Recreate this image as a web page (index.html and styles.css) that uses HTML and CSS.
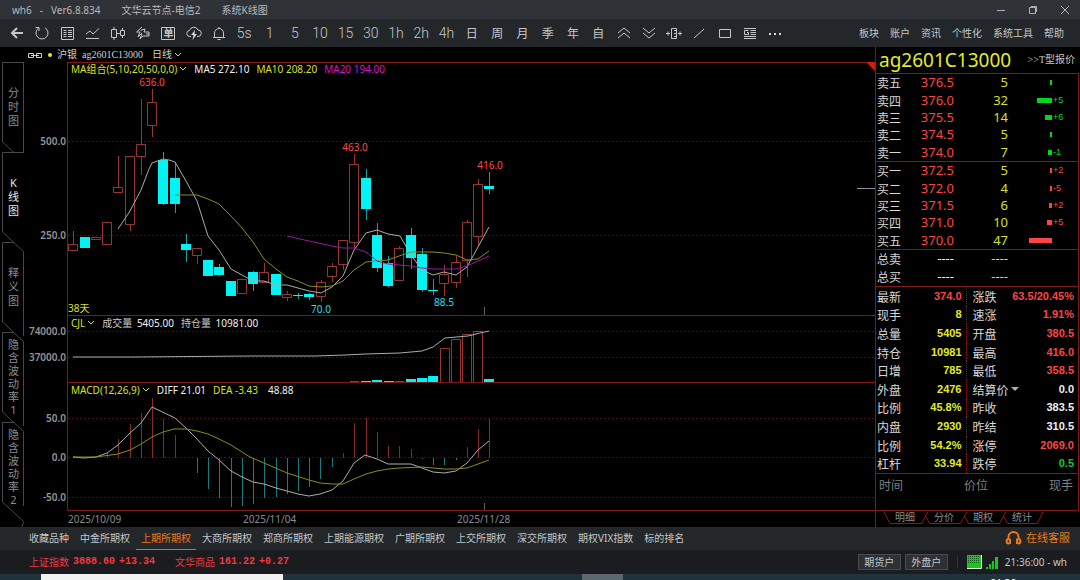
FILE: index.html
```html
<!DOCTYPE html>
<html lang="zh-CN">
<head>
<meta charset="utf-8">
<title>wh6 - Ver6.8.834</title>
<link rel="stylesheet" href="styles.css">
</head>
<body>
<header class="titlebar">
  <span class="app-name"><span>wh6</span><span>-</span><span>Ver6.8.834</span></span>
  <span>文华云节点-电信2</span>
  <span>系统K线图</span>
  <div class="window-buttons">
    <button aria-label="最小化"><svg width="10" height="10"><path d="M1 5.5H9"/></svg></button>
    <button aria-label="还原"><svg width="10" height="10"><path d="M1.5 2.5H7.5V8.5H1.5ZM3 1.5H8.500V7"/></svg></button>
    <button aria-label="关闭"><svg width="10" height="10"><path d="M1 1L9 9M9 1L1 9"/></svg></button>
  </div>
</header>

<div class="toolbar">
  <div class="tools">
    <button aria-label="返回"><svg width="16" height="16"><path class="thick" d="M3 8H14M8 3L3 8L8 13"/></svg></button>
    <button aria-label="刷新"><svg width="16" height="16"><path d="M1.500 2.500H5V6M5 2.800A6 6 0 1 0 11 2.800"/></svg></button>
    <button aria-label="报价表"><svg width="16" height="16"><path d="M2.500 2.500H14.500V14.500H2.500ZM4.500 5.500H7.500M9 5.500H13M4.500 7.500H7.500M9 7.500H13M4.500 9.500H7.500M9 9.500H13M4.500 11.500H7.500M9 11.500H13"/></svg></button>
    <button aria-label="分时图"><svg width="16" height="16"><path d="M1 9L5 6L8 9L14 3.500M1 13.500H14"/></svg></button>
    <button aria-label="K线图"><svg width="16" height="16"><path d="M1.500 4.500H6.500V12.500H1.500ZM4 2V4.500M4 12.500V15M10.500 5.500H14.500V10.500H10.500ZM12.500 3V5.500M12.500 10.500V13M7 8.500H10"/></svg></button>
    <button aria-label="闪电手"><svg width="16" height="16"><path d="M7 2L1.500 7H5L3 12L7 8M5.500 5.500L10 4L9 7H14V9H11M14 9V11H8L5 14L7 9"/></svg></button>
    <button class="boxed" aria-label="下单"><svg width="16" height="16"><path d="M1.500 2.500H14.500V14.500H1.500Z"/></svg><span>单</span></button>
    <button aria-label="云端"><svg width="16" height="16"><path class="cloud" d="M5 11.500H4A3 3 0 0 1 3.500 5.500A4.500 4.500 0 0 1 12 5A3.200 3.200 0 0 1 12 11.500H11"/><path class="solid" d="M9 5L5 10H7.500L6.500 15L11 9H8.500Z"/></svg></button>
    <button aria-label="提醒"><svg width="16" height="16"><path d="M2 12.500H14M3.500 12.500V8A4.500 4.500 0 0 1 12.500 8V12.500M8 2V3.500M6.500 14.500H9.500"/></svg></button>
    <button>5s</button><button>1</button><button>5</button><button>10</button><button>15</button><button>30</button><button>1h</button><button>2h</button><button>4h</button>
    <button class="cycle">日</button><button class="cycle">周</button><button class="cycle">月</button><button class="cycle">季</button><button class="cycle">年</button><button class="cycle">自</button>
    <button aria-label="上移"><svg width="16" height="16"><path d="M2 8L8 3L14 8M2 13L8 8L14 13"/></svg></button>
    <button aria-label="下移"><svg width="16" height="16"><path d="M2 3L8 8L14 3M2 8L8 13L14 8"/></svg></button>
    <button aria-label="画线尺"><svg width="18" height="16"><path d="M6.500 3.500H11.500V13.500H6.500ZM9 5.500H11M9 8.500H11M9 11.500H11M1 8.500H5M3 6.500V10.500M13 8.500H17M15 6.500V10.500"/></svg></button>
    <button aria-label="直线"><svg width="16" height="16"><path d="M3 13L13 4"/></svg></button>
    <button aria-label="矩形"><svg width="16" height="16"><path d="M2.500 4.500H13.500V12.500H2.500Z"/></svg></button>
    <button aria-label="资讯列表"><svg width="16" height="16"><path d="M2 3.500H14M8.500 5.500H14M8.500 7.500H14M8.500 9.500H14M2 11.500H14M2 13.500H14M6.500 5.500H2.500V9.500H6.500V7.500H5"/></svg></button>
    <button aria-label="更多"><svg width="16" height="16"><path class="solid" d="M2 8H4V10H2ZM7 8H9V10H7ZM12 8H14V10H12Z"/></svg></button>
  </div>
  <nav class="menu"><button>板块</button><button>账户</button><button>资讯</button><button>个性化</button><button>系统工具</button><button>帮助</button></nav>
</div>

<main class="workspace">
  <nav class="side-tabs">
    <svg class="side-shape" width="24" height="465" aria-hidden="true"><path d="M24 .5H2.500V80L14 90.500M24.500 90.500H2.500V170L23.500 189.500V274M23.500 0V90M14 180.500H2.500V260L23.500 279.500V364M14 270.500H2.500V350L23.500 369.500V444M14 360.500H2.500V440L23.500 459.500L22 465"/></svg>
    <button>分时图</button>
    <button class="active">K线图</button>
    <button>释义图</button>
    <button class="long">隐含波动率1</button>
    <button class="long">隐含波动率2</button>
  </nav>

  <section class="charts">
    <div class="contract">
      <svg width="16" height="8"><path d="M1.500 2.500H6.500V6.500H1.500ZM9.500 2.500H14.500V6.500H9.500ZM4 4.500H12"/></svg>
      <i class="dot"></i>
      <span>沪银</span><span>ag2601C13000</span>
      <button class="period">日线 <svg width="8" height="6"><path d="M1 1L4 4L7 1"/></svg></button>
    </div>

    <div class="panel">
      <div class="legend">
        <button class="yellow">MA组合(5,10,20,50,0,0)<svg width="8" height="6"><path d="M1 1L4 4L7 1"/></svg></button>
        <span class="white">MA5 272.10</span><span class="yellow">MA10 208.20</span><span class="magenta">MA20 194.00</span>
      </div>
      <svg class="plot price-plot">
        <line class="frame" x1="43" y1=".5" x2="100%" y2=".5"/>
        <line class="grid" x1="44" y1="79.500" x2="100%" y2="79.500"/>
        <line class="grid" x1="44" y1="173.500" x2="100%" y2="173.500"/>
        <line class="frame" x1="43" y1="253.500" x2="100%" y2="253.500"/>
        <line class="frame" x1="43.500" y1="0" x2="43.500" y2="254"/>
        <g transform="translate(-24 -62)">
          <text class="axis" x="66" y="145">500.0</text>
          <text class="axis" x="66" y="239">250.0</text>
          <path class="up" d="M73.500 231V244M118.500 156V187M130.500 225V231M141.500 99V144M141.500 157V175M152.500 89V102M152.500 126V137M197.500 256V264M264.500 263V272M287.500 291V294M287.500 298V301M321.500 280V282M321.500 297V302M332.500 263V266M332.500 277V282M343.500 265V270M354.500 154V164M354.500 243V249M399.500 246V248M444.500 265V274M444.500 284V296M456.500 256V262M456.500 283V288M467.500 220V222M467.500 261V277M478.500 179V184M478.500 237V246"/>
          <path class="up" d="M68.500 244.500h9v6h-9zM91.500 237.500h9v2h-9zM102.500 222.500h9v22h-9zM113.500 187.500h9v5h-9zM125.500 156.500h9v68h-9zM136.500 144.500h9v12h-9zM147.500 102.500h9v23h-9zM192.500 248.500h9v7h-9zM237.500 279.500h9v14h-9zM259.500 272.500h9v10h-9zM282.500 294.500h9v3h-9zM316.500 282.500h9v14h-9zM327.500 266.500h9v10h-9zM338.500 240.500h9v24h-9zM349.500 164.500h9v78h-9zM394.500 248.500h9v32h-9zM439.500 274.500h9v9h-9zM451.500 262.500h9v20h-9zM462.500 222.500h9v38h-9zM473.500 184.500h9v52h-9z"/>
          <path class="down-wick" d="M163.500 152V205M175.500 162V213M186.500 234V262M219.500 264V276M253.500 271V291M298.500 293V299M309.500 293V300M366.500 169V220M377.500 223V272M388.500 256V287M411.500 228V269M422.500 248V292M433.500 279V295M489.500 172V194"/>
          <path class="down" d="M80 237h10v11h-10zM158 160h10v44h-10zM170 178h10v26h-10zM181 244h10v6h-10zM203 260h10v16h-10zM214 267h10v8h-10zM226 281h10v15h-10zM248 272h10v12h-10zM271 274h10v21h-10zM293 295h10v1h-10zM304 294h10v3h-10zM361 178h10v31h-10zM372 235h10v33h-10zM383 263h10v23h-10zM406 235h10v23h-10zM417 254h10v36h-10zM428 290h10v1h-10zM484 186h10v3h-10z"/>
          <polyline class="line white-line" points="118,229 130,211 141,190 149,169 152,163 163,159 169,160 175,162 186,181 197,201 208,236 219,250 231,269 242,275 253,281 264,281 276,285 287,285 298,288 309,291 321,293 332,287 343,276 354,250 366,233 377,230 388,234 400,236 411,255 422,270 433,275 444,272 456,275 467,267 478,247 489,227"/>
          <polyline class="line yellow-line" points="175,195 197,195 208,199 219,204 231,216 242,228 253,242 264,259 276,269 287,277 298,281 309,286 321,287 332,286 343,281 354,270 366,262 377,261 388,260 399,256 411,252 422,252 433,252 444,253 456,255 467,260 478,259 489,251"/>
          <polyline class="line magenta-line" points="287,236 309,241 332,246 343,248 354,248 366,252 377,261 388,264 411,266 422,268 433,269 456,269 467,266 489,256"/>
          <path class="marker" d="M484.500 307V315"/>
          <text class="tag hot" x="152" y="86">636.0</text>
          <text class="tag hot" x="355" y="151">463.0</text>
          <text class="tag hot" x="490" y="169">416.0</text>
          <text class="tag cool" x="321" y="313">70.0</text>
          <text class="tag cool" x="444" y="306">88.5</text>
          <text class="days" x="68" y="312">38天</text>
        </g>
      </svg>
      <svg class="last-mark" width="18" height="1"><path d="M0 .5H18"/></svg>
      <svg class="corner" width="9" height="9"><path d="M0 0H9V9Z"/></svg>
    </div>

    <div class="panel">
      <div class="legend">
        <button class="yellow">CJL<svg width="8" height="6"><path d="M1 1L4 4L7 1"/></svg></button>
        <span class="white"><span class="name">成交量</span> 5405.00</span><span class="white"><span class="name">持仓量</span> 10981.00</span>
      </div>
      <svg class="plot volume-plot">
        <line class="grid" x1="44" y1="15.500" x2="100%" y2="15.500"/>
        <line class="grid" x1="44" y1="41.500" x2="100%" y2="41.500"/>
        <line class="frame" x1="43" y1="66.500" x2="100%" y2="66.500"/>
        <line class="frame" x1="43.500" y1="0" x2="43.500" y2="67"/>
        <g transform="translate(-24 -316)">
          <text class="axis" x="66" y="335">74000.0</text>
          <text class="axis" x="66" y="361">37000.0</text>
          <path class="up" d="M440.500 382V348.500h9V382M451.500 382V339.500h9V382M462.500 382V334.500h9V382M473.500 382V331.500h9V382M350 381.500h9M395 381.500h9"/>
          <path class="down" d="M361 381h10v1h-10zM372 380h10v2h-10zM384 381h10v1h-10zM406 379h10v3h-10zM417 378h10v4h-10zM428 376h10v6h-10zM484 379h10v3h-10z"/>
          <polyline class="line white-line" points="73,357 135,357 250,356 315,356 345,355 365,354 400,353 422,351 433,347 445,338 468,336 480,333 489,331"/>
        </g>
      </svg>
    </div>

    <div class="panel">
      <div class="legend">
        <button class="yellow">MACD(12,26,9)<svg width="8" height="6"><path d="M1 1L4 4L7 1"/></svg></button>
        <span class="white">DIFF 21.01</span><span class="yellow">DEA -3.43</span><span class="white hist">48.88</span>
      </div>
      <svg class="plot macd-plot">
        <line class="grid" x1="44" y1="35.500" x2="100%" y2="35.500"/>
        <line class="grid" x1="44" y1="74.500" x2="100%" y2="74.500"/>
        <line class="grid" x1="44" y1="114.500" x2="100%" y2="114.500"/>
        <line class="frame" x1="43" y1="127.500" x2="100%" y2="127.500"/>
        <line class="frame" x1="43.500" y1="0" x2="43.500" y2="128"/>
        <g transform="translate(-24 -383)">
          <text class="axis" x="66" y="422">50.0</text>
          <text class="axis" x="66" y="461">0.0</text>
          <text class="axis" x="66" y="501">-50.0</text>
          <path class="bar-up" d="M107.500 452V458M118.500 439V458M130.500 424V458M141.500 413V458M152.500 398V458M163.500 419V458M175.500 435V458M343.500 453V458M354.500 423V458M366.500 418V458M377.500 432V458M388.500 446V458M399.500 446V458M411.500 449V458M467.500 447V458M478.500 429V458M489.500 419V458"/>
          <path class="bar-down" d="M197.500 458V473M208.500 458V489M219.500 458V498M231.500 458V507M242.500 458V506M253.500 458V504M264.500 458V498M276.500 458V497M287.500 458V494M298.500 458V491M309.500 458V487M320.500 458V479M332.500 458V467M422.500 458V459M433.500 458V465M444.500 458V465M456.500 458V460"/>
          <polyline class="line white-line" points="73,457 84,458 96,457 107,453 118,445 130,433 141,423 152,407 175,418 186,428 197,439 208,451 219,460 231,471 242,477 253,482 264,484 276,488 287,491 298,494 309,496 320,494 332,490 343,481 354,463 365,455 377,459 388,464 411,464 422,468 433,472 444,473 456,471 467,463 478,450 489,441"/>
          <polyline class="line yellow-line" points="73,457 96,457 118,454 130,450 141,444 152,437 163,432 174,429 186,429 197,431 208,434 219,439 231,445 242,452 250,457 264,463 287,473 309,480 320,483 332,484 343,484 354,479 366,474 377,471 388,469 400,468 422,467 444,469 456,469 467,468 478,464 489,460"/>
          <path class="marker" d="M484.500 503V510"/>
          <text class="date" x="68" y="523">2025/10/09</text>
          <text class="date" x="243" y="523">2025/11/04</text>
          <text class="date" x="457" y="523">2025/11/28</text>
        </g>
      </svg>
    </div>
  </section>

  <aside class="quote">
    <div class="quote-title"><h1>ag2601C13000</h1><button>&gt;&gt;T型报价</button></div>
    <div class="quote-body">
    <table class="book sell">
      <tr><th>卖五</th><td class="price">376.5</td><td class="qty">5</td><td class="depth"><i style="width:2px"></i></td><td class="delta"></td></tr>
      <tr><th>卖四</th><td class="price">376.0</td><td class="qty">32</td><td class="depth"><i style="width:15px"></i></td><td class="delta">+5</td></tr>
      <tr><th>卖三</th><td class="price">375.5</td><td class="qty">14</td><td class="depth"><i style="width:7px"></i></td><td class="delta">+6</td></tr>
      <tr><th>卖二</th><td class="price">374.5</td><td class="qty">5</td><td class="depth"><i style="width:2px"></i></td><td class="delta"></td></tr>
      <tr><th>卖一</th><td class="price">374.0</td><td class="qty">7</td><td class="depth"><i style="width:4px"></i></td><td class="delta">-1</td></tr>
    </table>
    <table class="book buy">
      <tr><th>买一</th><td class="price">372.5</td><td class="qty">5</td><td class="depth"><i style="width:2px"></i></td><td class="delta">+2</td></tr>
      <tr><th>买二</th><td class="price">372.0</td><td class="qty">4</td><td class="depth"><i style="width:2px"></i></td><td class="delta">-5</td></tr>
      <tr><th>买三</th><td class="price">371.5</td><td class="qty">6</td><td class="depth"><i style="width:3px"></i></td><td class="delta">+2</td></tr>
      <tr><th>买四</th><td class="price">371.0</td><td class="qty">10</td><td class="depth"><i style="width:5px"></i></td><td class="delta">+5</td></tr>
      <tr><th>买五</th><td class="price">370.0</td><td class="qty">47</td><td class="depth"><i style="width:23px"></i></td><td class="delta"></td></tr>
    </table>
    <table class="book totals">
      <tr><th>总卖</th><td class="price">----</td><td class="qty">----</td><td class="depth"></td><td class="delta"></td></tr>
      <tr><th>总买</th><td class="price">----</td><td class="qty">----</td><td class="depth"></td><td class="delta"></td></tr>
    </table>
    <table class="stats">
      <tr><th>最新</th><td class="red">374.0</td><th>涨跌</th><td class="red">63.5/20.45%</td></tr>
      <tr><th>现手</th><td>8</td><th>速涨</th><td class="red">1.91%</td></tr>
      <tr><th>总量</th><td>5405</td><th>开盘</th><td class="red">380.5</td></tr>
      <tr><th>持仓</th><td>10981</td><th>最高</th><td class="red">416.0</td></tr>
      <tr><th>日增</th><td>785</td><th>最低</th><td class="red">358.5</td></tr>
      <tr><th>外盘</th><td>2476</td><th><button>结算价<svg width="8" height="4"><path d="M0 0H8L4 4Z"/></svg></button></th><td class="white">0.0</td></tr>
      <tr><th>比例</th><td>45.8%</td><th>昨收</th><td class="white">383.5</td></tr>
      <tr><th>内盘</th><td>2930</td><th>昨结</th><td class="white">310.5</td></tr>
      <tr><th>比例</th><td>54.2%</td><th>涨停</th><td class="red">2069.0</td></tr>
      <tr><th>杠杆</th><td>33.94</td><th>跌停</th><td class="green">0.5</td></tr>
    </table>
    <div class="ticks"><span>时间</span><span>价位</span><span>现手</span></div>
    </div>
    <nav class="quote-tabs">
      <svg width="204" height="16" aria-hidden="true"><path d="M7.500 0L14 12.500H45.500L52 .5M49.500 5L53.500 12.500H84.500L91 .5M88.500 5L92.500 12.500H123.500L130 .5M127.500 5L131.500 12.500H161.500L167 .5"/></svg>
      <button>明细</button><button>分价</button><button>期权</button><button>统计</button>
    </nav>
  </aside>
</main>

<nav class="boards">
  <button>收藏品种</button><button>中金所期权</button><button class="active">上期所期权</button><button>大商所期权</button><button>郑商所期权</button><button>上期能源期权</button><button>广期所期权</button><button>上交所期权</button><button>深交所期权</button><button>期权VIX指数</button><button>标的排名</button>
  <button class="service"><svg width="17" height="14"><path d="M3.500 8V6A5 5 0 0 1 13.500 6V8M3.500 8C1 8 1 12.500 3.500 12.500L5 12V8.500ZM13.500 8C16 8 16 12.500 13.500 12.500L12 12V8.500Z"/></svg>在线客服</button>
</nav>

<footer class="status">
  <div class="index"><span>上证指数</span><b>3888.60</b><b>+13.34</b></div>
  <div class="index"><span>文华商品</span><b>161.22</b><b>+0.27</b></div>
  <div class="status-right">
    <button>期货户</button><button>外盘户</button>
    <i class="divider"></i>
    <svg width="15" height="14"><path fill="#18c818" d="M0 0H14V13H0Z"/><path stroke="#0b5c12" stroke-dasharray="1 1" d="M1 1.500H13M1 3.500H13M1 5.500H13M1 7.500H13"/><path stroke="#e8f5e8" fill="none" d="M14.500 0V13.500H0"/></svg>
    <svg width="13" height="13"><path fill="#18c818" d="M0 11H2V13H0ZM3 8H5V13H3ZM6 5H8V13H6ZM9 1H12V13H9Z"/></svg>
    <span>21:36:00 - wh</span>
  </div>
</footer>
<div class="taskbar"><i class="search"></i><i class="task"></i><span class="clock">21:36</span></div>
</body>
</html>
```
FILE: styles.css
```css
* { box-sizing: border-box; }
body {
  margin: 0;
  min-height: 100vh;
  display: flex;
  flex-direction: column;
  overflow: hidden;
  background: #000;
  color: #c4c6c8;
  font: 10px/14px "Noto Sans", "Noto Sans CJK SC", sans-serif;
}
button {
  padding: 0;
  border: 0;
  background: none;
  color: inherit;
  font: inherit;
  white-space: nowrap;
}
svg { display: block; flex: none; }
.yellow { color: #d8e020; }
.white { color: #f0f0f0; }
.magenta { color: #d414d4; }

.titlebar {
  display: flex;
  align-items: center;
  gap: 21px;
  height: 19px;
  padding: 0 10px 0 12px;
  background: #2f3236;
  color: #b8babc;
}
.app-name { display: flex; gap: 8px; }
.window-buttons { display: flex; gap: 22px; margin-left: auto; }
.window-buttons path { fill: none; stroke: #b0b2b4; }

.toolbar {
  display: flex;
  align-items: center;
  justify-content: space-between;
  height: 28px;
  padding: 0 16px 0 4px;
  background: #23272a;
}
.tools {
  flex: 0 1 784px;
  display: grid;
  grid-template-columns: repeat(31, 1fr);
  align-items: center;
}
.tools button {
  display: flex;
  align-items: center;
  justify-content: center;
  height: 20px;
  font: 300 14px/20px Roboto, sans-serif;
}
.tools .cycle { font: 12px/20px "Noto Sans CJK SC", sans-serif; }
.tools path { fill: none; stroke: #c4c6c8; }
.tools .thick { stroke-width: 2; }
.tools .solid { fill: #d4d6d8; stroke: none; }
.tools .boxed { display: grid; place-items: center; place-content: center; }
.boxed svg, .boxed span { grid-area: 1 / 1; }
.boxed span { font: bold 10px/16px "Noto Sans CJK SC", sans-serif; }
.menu { display: flex; gap: 11px; }

.workspace {
  flex: 1 0 auto;
  display: grid;
  grid-template-columns: 24px minmax(0, 1fr) 205px;
}
.side-tabs {
  position: relative;
  display: flex;
  flex-direction: column;
  margin-top: 15px;
}
.side-shape { position: absolute; top: 0; left: 0; }
.side-shape path { fill: none; stroke: #484848; }
.side-tabs button {
  width: 11px;
  height: 90px;
  margin-left: 8px;
  color: #8c8c8c;
  font-size: 11px;
  line-height: 14px;
  white-space: normal;
  word-break: break-all;
}
.side-tabs .long { line-height: 13px; }
.side-tabs .active { color: #e8e8e8; }

.charts { display: flex; flex-direction: column; }
.contract {
  display: flex;
  align-items: center;
  gap: 5px;
  height: 15px;
  padding-left: 3px;
  color: #d0d0d0;
  font-family: "Liberation Serif", "Noto Sans CJK SC", serif;
}
.contract path, .legend path { fill: none; stroke: currentColor; }
.dot { width: 4px; height: 4px; border-radius: 50%; background: #e0f020; }
.period { display: flex; align-items: center; gap: 2px; margin-left: 4px; }
.panel { position: relative; }
.legend {
  position: absolute;
  top: 0;
  left: 47px;
  display: flex;
  gap: 7px;
}
.legend button { display: flex; align-items: center; gap: 2px; }
.legend .name { margin-right: 2px; color: #c8c8c8; }
.hist { margin-left: 3px; }
.plot { width: 100%; }
.price-plot { height: 254px; }
.volume-plot { height: 67px; }
.macd-plot { height: 144px; }
.frame { stroke: #801818; }
.grid { stroke: #480c10; stroke-dasharray: 2 2; }
.axis { fill: #949494; font-weight: 600; text-anchor: end; }
.tag { text-anchor: middle; }
.hot { fill: #ff4848; }
.cool { fill: #28dce8; }
.days { fill: #d8e020; }
.date { fill: #8c8c8c; }
.up { fill: none; stroke: #963634; }
.down-wick { stroke: #18a0a0; }
.down { fill: #00f4f4; }
.bar-up { stroke: #862a28; }
.bar-down { stroke: #187c80; }
.line { fill: none; }
.white-line { stroke: #acacac; }
.yellow-line { stroke: #8c8c20; }
.magenta-line { stroke: #9c149c; }
.marker { stroke: #606060; }
.last-mark { position: absolute; top: 126px; right: 0; stroke: #909090; }
.corner { position: absolute; top: 0; right: 0; fill: #d01c14; }

.quote {
  display: flex;
  flex-direction: column;
  border-left: 1px solid #801818;
}
.quote-title {
  display: flex;
  align-items: center;
  justify-content: space-between;
  height: 26px;
  padding: 0 5px 0 3px;
}
.quote-title h1 {
  margin: 0;
  color: #e4ec20;
  font-size: 19px;
  font-weight: 400;
  line-height: 26px;
}
.quote-title button { font-family: "Liberation Serif", "Noto Sans CJK SC", serif; }
.quote-body {
  flex: 1;
  margin-right: 1px;
  border: 1px solid #801818;
  border-left: 0;
}
.quote table {
  width: 100%;
  border-collapse: collapse;
  table-layout: fixed;
}
.quote th, .quote td { padding: 0; white-space: nowrap; text-align: right; }
.quote th {
  padding-left: 1px;
  color: #d8d8d8;
  font: 12px/17px "Noto Sans CJK SC", sans-serif;
  text-align: left;
}
.book { border-bottom: 1px solid #801818; font-size: 13px; line-height: 17px; }
.sell, .buy { height: 88px; }
.totals { height: 37px; }
.book th { width: 34px; }
.price { width: 44px; color: #ff4444; }
.qty { width: 54px; color: #d8e020; }
.totals .price { color: #f0f0f0; }
.depth { width: 44px; }
.depth i { display: block; height: 5px; margin-left: auto; background: currentColor; }
.sell .depth, .sell .delta { color: #00d818; }
.buy .depth, .buy .delta { color: #ff4444; }
.quote .delta {
  padding-left: 1px;
  font: 9px/17px "Liberation Sans", sans-serif;
  text-align: left;
}
.stats {
  height: 187px;
  border-bottom: 1px solid #801818;
}
.stats th { width: 34px; }
.stats th + td { width: 56px; }
.quote .stats th:nth-child(3) {
  width: 35px;
  padding-left: 6px;
  border-left: 1px dotted #801818;
}
.quote .stats td {
  padding-right: 4px;
  color: #e4ec20;
  font: bold 11px/17px "Liberation Sans", sans-serif;
}
.stats td:nth-child(4) { width: auto; }
.quote .stats .red { color: #ff4444; }
.quote .stats .white { color: #f0f0f0; }
.quote .stats .green { color: #10cc20; }
.stats button { display: flex; align-items: center; gap: 2px; }
.stats svg { fill: #b0b0b0; }
.ticks {
  display: flex;
  justify-content: space-between;
  padding: 2px 5px 0 3px;
  color: #808080;
  font: 12px/18px "Noto Sans CJK SC", sans-serif;
}
.quote-tabs {
  position: relative;
  display: flex;
  gap: 19px;
  height: 16px;
  padding-left: 19px;
  color: #8c8c8c;
}
.quote-tabs button { height: 12px; line-height: 12px; }
.quote-tabs svg { position: absolute; top: 0; left: 0; fill: none; stroke: #8c1818; }

.boards {
  display: flex;
  align-items: center;
  gap: 1px;
  height: 23px;
  padding: 0 10px 0 24px;
  background: #23272a;
}
.boards button { height: 23px; padding: 0 5px; border-bottom: 1px solid transparent; }
.boards .active { color: #f07818; border-color: #e07018; }
.boards .service {
  display: flex;
  align-items: center;
  gap: 4px;
  margin-left: auto;
  padding: 0;
  color: #f07818;
  font-size: 11px;
}
.service path { fill: none; stroke: #f07818; stroke-width: 2; }

.status {
  display: flex;
  align-items: center;
  gap: 20px;
  height: 24px;
  padding: 0 13px 0 29px;
  background: #1b1c20;
}
.index { display: flex; gap: 4px; color: #ee3a40; }
.index b { font-family: "Liberation Mono", monospace; }
.status-right { display: flex; align-items: center; gap: 4px; margin-left: auto; }
.status-right button {
  width: 43px;
  height: 16px;
  border: 1px solid #484b50;
  background: #2d3035;
}
.divider { width: 1px; height: 12px; margin: 0 5px; background: #6c1c20; }
.status-right span { margin-left: 2px; }

.taskbar {
  display: flex;
  height: 6px;
  overflow: hidden;
  background: #20323c;
}
.search { flex: 0 1 242px; margin-left: 41px; background: #f2f2f2; }
.task { flex: 0 1 41px; margin-left: 299px; background: #5c6870; }
.clock { margin: 2px 64px 0 auto; color: #fff; }
```
